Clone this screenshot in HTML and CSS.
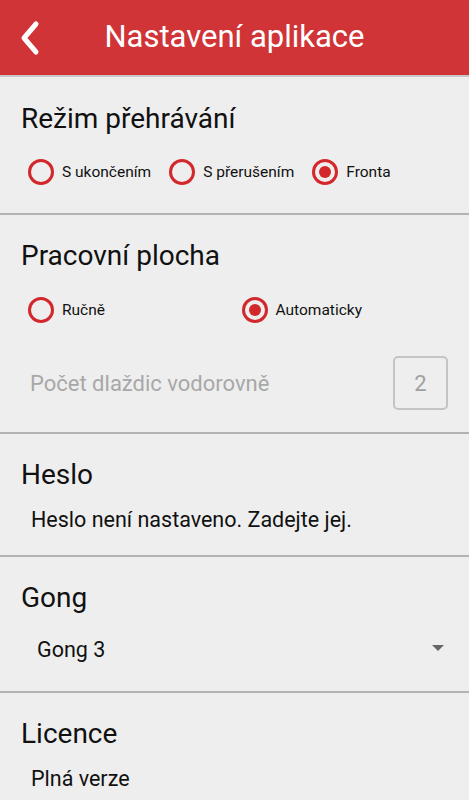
FILE: index.html
```html
<!DOCTYPE html>
<html lang="cs">
<head>
	<meta charset="UTF-8">
	<title>Nastavení aplikace</title>
	<link rel="stylesheet" href="styles.css">
</head>
<body>
	<div class="header">
		<svg class="back" width="24" height="36" viewBox="0 0 24 36">
			<polyline points="17,4 5,18 17,32" fill="none" stroke="#fff" stroke-width="5" stroke-linecap="round" stroke-linejoin="round"/>
		</svg>
		<h1>Nastavení aplikace</h1>
	</div>

	<div class="section first">
		<h2>Režim přehrávání</h2>
		<ul class="radios">
			<li><span class="radio"></span>S ukončením</li>
			<li><span class="radio"></span>S přerušením</li>
			<li><span class="radio checked"></span>Fronta</li>
		</ul>
	</div>

	<div class="section">
		<h2>Pracovní plocha</h2>
		<ul class="radios half">
			<li><span class="radio"></span>Ručně</li>
			<li><span class="radio checked"></span>Automaticky</li>
		</ul>
		<div class="field">
			<span>Počet dlaždic vodorovně</span>
			<div class="box">2</div>
		</div>
	</div>

	<div class="section">
		<h2>Heslo</h2>
		<p class="value">Heslo není nastaveno. Zadejte jej.</p>
	</div>

	<div class="section">
		<h2>Gong</h2>
		<div class="select">
			<span>Gong 3</span>
			<span class="arrow"></span>
		</div>
	</div>

	<div class="section last">
		<h2>Licence</h2>
		<p class="value">Plná verze</p>
	</div>
</body>
</html>
```

FILE: styles.css
```css
*{
	margin: 0;
	padding: 0;
	box-sizing: border-box;
}
ul{
	list-style: none;
}
body{
	background-color: #eeeeee;
	font-family: Roboto, "Noto Sans", sans-serif;
	color: #111;
	width: 469px;
	height: 800px;
	overflow: hidden;
}
.header{
	height: 77px;
	background-color: #d03437;
	border-bottom: 2px solid #c8c8c8;
	display: flex;
	align-items: center;
	justify-content: center;
	position: relative;
}
.header h1{
	color: #fff;
	font-weight: 400;
	font-size: 31px;
	margin-top: -3px;
}
.back{
	position: absolute;
	left: 19px;
	top: 20px;
}
.section{
	padding: 21px 0 20px 0;
	border-bottom: 2px solid #b3b3b3;
}
.section.first{
	padding-top: 22px;
	padding-bottom: 21px;
}
.section.last{
	border-bottom: none;
}
.section h2{
	font-weight: 400;
	font-size: 28px;
	line-height: 40px;
	height: 40px;
	padding-left: 21px;
	color: #111;
}
.radios{
	display: flex;
	gap: 18px;
	height: 40px;
	margin-top: 13px;
	padding-left: 28px;
}
.radios>li{
	display: flex;
	align-items: center;
	gap: 8px;
	font-size: 15.5px;
}
.radios.half{
	display: grid;
	grid-template-columns: 1fr 1fr;
	gap: 0;
	padding-right: 14px;
	margin-top: 14px;
}
.radio{
	width: 26px;
	height: 26px;
	border: 3px solid #d3282b;
	border-radius: 50%;
	display: flex;
	align-items: center;
	justify-content: center;
}
.radio.checked::after{
	content: "";
	width: 12px;
	height: 12px;
	border-radius: 50%;
	background-color: #d3282b;
}
.field{
	display: flex;
	align-items: center;
	justify-content: space-between;
	margin-top: 26px;
	height: 54px;
	padding-left: 30px;
	padding-right: 21px;
	margin-bottom: 2px;
	font-size: 22px;
	color: #a8a8a8;
}
.box{
	width: 55px;
	height: 54px;
	border: 2px solid #c4c4c4;
	border-radius: 5px;
	display: flex;
	align-items: center;
	justify-content: center;
	font-size: 22px;
	color: #a0a0a0;
}
.value{
	margin-top: 10px;
	line-height: 30px;
	font-size: 21.5px;
	padding-left: 31px;
}
.select{
	display: flex;
	align-items: center;
	justify-content: space-between;
	height: 40px;
	margin-top: 11px;
	margin-bottom: 2px;
	padding-left: 37px;
	padding-right: 25px;
	font-size: 21.5px;
}
.arrow{
	width: 0;
	height: 0;
	border-left: 6px solid transparent;
	border-right: 6px solid transparent;
	border-top: 6px solid #666;
	margin-top: -2px;
}
```
